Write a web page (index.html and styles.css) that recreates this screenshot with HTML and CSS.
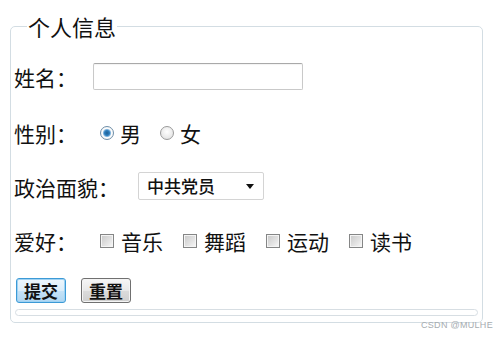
FILE: index.html
```html
<!DOCTYPE html>
<html lang="zh">
<head>
<meta charset="utf-8">
<title>个人信息</title>
<link rel="stylesheet" href="styles.css">
</head>
<body>
<form class="form">
  <fieldset class="box">
    <legend class="legend">个人信息</legend>
    <div class="row row-first">
      <label class="label" for="name">姓名：</label>
      <input class="text" id="name" type="text">
    </div>
    <div class="row row-second">
      <span class="label">性别：</span>
      <label class="opt"><input class="radio" type="radio" name="sex" checked><span>男</span></label>
      <label class="opt"><input class="radio" type="radio" name="sex"><span>女</span></label>
    </div>
    <div class="row">
      <span class="label label-wide">政治面貌：</span>
      <div class="select"><span class="select-text">中共党员</span><span class="arrow"></span></div>
    </div>
    <div class="row">
      <span class="label">爱好：</span>
      <label class="opt opt-check"><input class="check" type="checkbox"><span>音乐</span></label>
      <label class="opt opt-check"><input class="check" type="checkbox"><span>舞蹈</span></label>
      <label class="opt opt-check"><input class="check" type="checkbox"><span>运动</span></label>
      <label class="opt opt-check"><input class="check" type="checkbox"><span>读书</span></label>
    </div>
    <div class="buttons">
      <button type="button" class="btn btn-primary">提交</button>
      <button type="button" class="btn">重置</button>
    </div>
    <div class="inner-bar"></div>
  </fieldset>
</form>
<div class="watermark">CSDN @MULHE</div>
</body>
</html>
```
FILE: styles.css
```css
html, body {
  margin: 0;
  padding: 0;
  background: #ffffff;
}
body {
  width: 499px;
  height: 338px;
  position: relative;
  overflow: hidden;
  font-family: "Noto Sans CJK SC", "Noto Sans", sans-serif;
  color: #111;
}
.form {
  padding: 13px 16px 0 10px;
}
.box {
  margin: 0;
  border: 1px solid #d3dde3;
  border-radius: 5px;
  padding: 0 4px 6px 3px;
  min-width: 0;
}
.legend {
  font-size: 22px;
  line-height: 26px;
  padding: 0 1px;
  margin-left: 13px;
}
.row {
  display: flex;
  align-items: center;
  height: 54px;
  font-size: 21px;
  line-height: 26px;
}
.row-first {
  margin-top: 11px;
}
.row-second {
  margin-top: 2px;
}
.label {
  width: 79px;
  flex: none;
}
.label-wide {
  width: 124px;
}
.text {
  width: 210px;
  height: 27px;
  box-sizing: border-box;
  border: 1px solid #c9c9c9;
  border-top-color: #a9a9a9;
  border-radius: 2px;
  margin: 0;
  padding: 0 4px;
  box-shadow: inset 0 1px 1px rgba(0,0,0,0.05);
  position: relative;
  top: -1px;
}
.opt {
  display: flex;
  align-items: center;
  margin-left: 7px;
  margin-right: 12px;
}
.opt span {
  margin-left: 6px;
}
.opt-check {
  margin-left: 7px;
  margin-right: 13px;
}
.opt-check span {
  margin-left: 7px;
}
.radio {
  appearance: none;
  -webkit-appearance: none;
  width: 14px;
  height: 14px;
  margin: 0;
  border-radius: 50%;
  border: 1px solid #9a9a9a;
  background: radial-gradient(circle at 50% 40%, #ffffff 0%, #dcdcdc 100%);
  box-sizing: border-box;
  position: relative;
}
.radio:checked {
  border-color: #6e8ea8;
  background: radial-gradient(circle at 50% 50%, #1f5f93 0, #2d7fbf 2.5px, #7fb3dc 3.5px, #ffffff 4.6px, #e4e4e4 100%);
}
.check {
  appearance: none;
  -webkit-appearance: none;
  width: 14px;
  height: 14px;
  margin: 0;
  border: 1px solid #858686;
  box-sizing: border-box;
  background: linear-gradient(135deg, #c8c8c8 0%, #e6e6e6 65%, #fafafa 100%);
  box-shadow: inset 0 0 0 1px #f4f4f4;
}
.select {
  width: 126px;
  height: 28px;
  box-sizing: border-box;
  border: 1px solid #d4d4d4;
  border-radius: 2px;
  display: flex;
  align-items: center;
  justify-content: space-between;
  padding: 0 9px 0 8px;
  position: relative;
  top: -1px;
}
.select-text {
  font-size: 17px;
  font-weight: 500;
}
.arrow {
  width: 0;
  height: 0;
  border-left: 4px solid transparent;
  border-right: 4px solid transparent;
  border-top: 5px solid #111;
}
.buttons {
  display: flex;
  gap: 15px;
  margin-top: 10px;
  padding-left: 2px;
}
.btn {
  width: 50px;
  height: 25px;
  margin: 0;
  padding: 0;
  font-family: "Noto Sans CJK SC", "Noto Sans", sans-serif;
  font-size: 17px;
  font-weight: 700;
  line-height: 20px;
  color: #111;
  border: 1px solid #707070;
  border-radius: 3px;
  background: linear-gradient(#f6f6f6 0%, #e8e8e8 50%, #dcdcdc 51%, #cfcfcf 100%);
  box-shadow: inset 0 0 0 1px #f4f4f4;
}
.btn-primary {
  border: 1px solid #3c9ad6;
  background: linear-gradient(#eef7fd 0%, #dcedf9 50%, #c6e3f7 51%, #b0d6f1 100%);
  box-shadow: inset 0 0 0 1px #9fd2f3;
}
.inner-bar {
  margin-top: 6px;
  margin-left: 1px;
  height: 7px;
  box-sizing: border-box;
  width: 463px;
  border: 1px solid #d7dee3;
  border-radius: 4px;
}
.watermark {
  position: absolute;
  left: 421px;
  top: 320px;
  font-family: "Liberation Sans", Arial, sans-serif;
  font-size: 9px;
  line-height: 11px;
  color: #a6acb0;
  letter-spacing: 0.3px;
}
```
